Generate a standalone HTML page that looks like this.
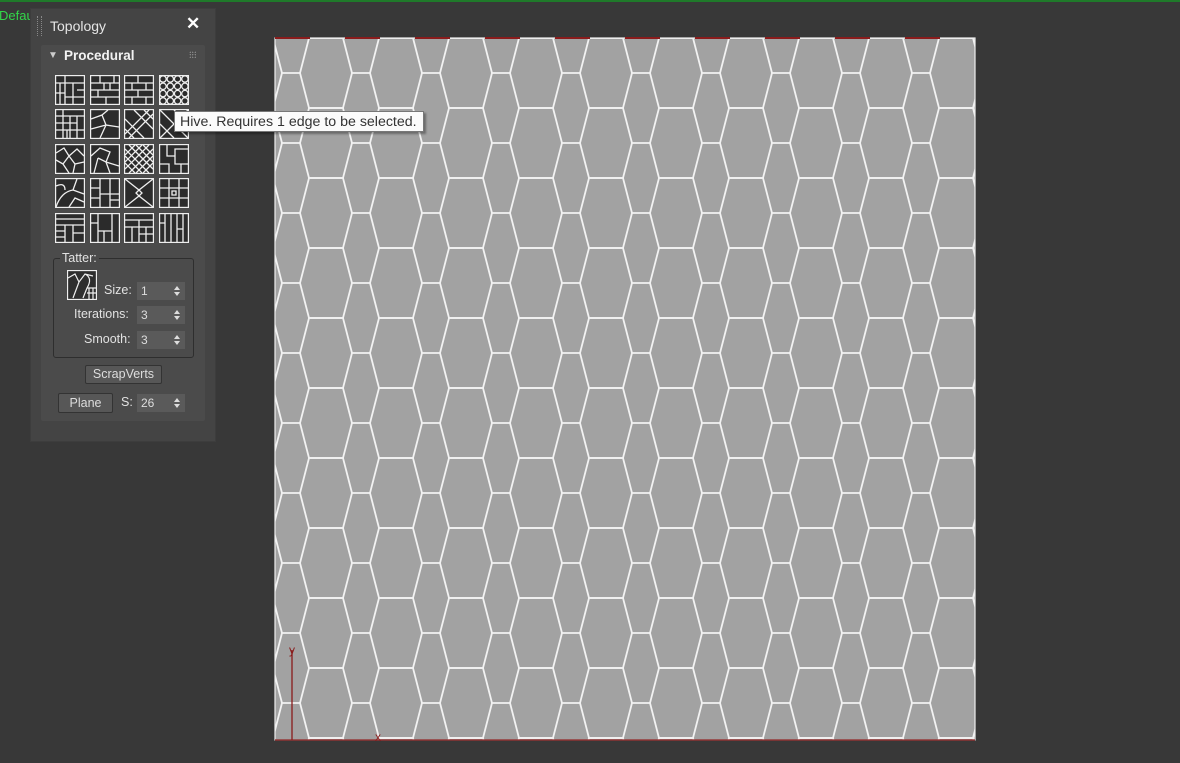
<!DOCTYPE html>
<html style="overflow:hidden"><head><meta charset="utf-8"><style>
html,body{margin:0;width:1180px;height:763px;overflow:hidden}
body{background:#383838;position:relative;font-family:"Liberation Sans",sans-serif}
.abs{position:absolute}
.ic{position:absolute;width:30px;height:30px}
.lbl{color:#e2e2e2;font-size:12.5px;position:absolute}
.spin{position:absolute;background:#5a5a5a;width:48px;height:18px;color:#ddd;font-size:12px;line-height:18px;padding-left:4px;box-sizing:border-box}
.spin:after{content:"";position:absolute;right:5px;top:4px;border:3px solid transparent;border-bottom:4px solid #ddd;border-top:0}
.spin:before{content:"";position:absolute;right:5px;top:10px;border:3px solid transparent;border-top:4px solid #ddd;border-bottom:0}
.btn{position:absolute;background:#575757;border:1px solid #333;color:#ddd;font-size:12.5px;text-align:center;border-radius:2px;box-sizing:border-box}
</style></head><body>
<div class="abs" style="left:0;top:0;width:1180px;height:2px;background:#1f7a2a"></div>
<div class="abs" style="left:-1px;top:8px;color:#33d64a;font-size:13px">Defau</div>

<svg class="abs" style="left:0;top:0;display:block" width="1180" height="763">
<defs><clipPath id="c"><rect x="275" y="38" width="700" height="702"/></clipPath></defs>
<rect x="275" y="38" width="700" height="702" fill="#a2a2a2"/>
<g clip-path="url(#c)" stroke="#f2f2f2" stroke-width="1.8" fill="none" id="hx"></g>
<rect x="275" y="38" width="700" height="702" fill="none" stroke="#eee" stroke-width="1.2"/>
<g stroke="#8a1c1c" stroke-width="2">
<line x1="275" y1="38" x2="310" y2="38"/><line x1="345" y1="38" x2="380" y2="38"/><line x1="415" y1="38" x2="450" y2="38"/><line x1="485" y1="38" x2="520" y2="38"/><line x1="555" y1="38" x2="590" y2="38"/><line x1="625" y1="38" x2="660" y2="38"/><line x1="695" y1="38" x2="730" y2="38"/><line x1="765" y1="38" x2="800" y2="38"/><line x1="835" y1="38" x2="870" y2="38"/><line x1="905" y1="38" x2="940" y2="38"/>
<line x1="275" y1="740" x2="975" y2="740" stroke-width="1.2"/>
<line x1="292" y1="650" x2="292" y2="740" stroke-width="1.3"/>
</g>
<text x="289" y="654" fill="#8a1c1c" font-size="12" font-family="Liberation Sans">y</text>
<text x="375" y="741" fill="#8a1c1c" font-size="12" font-family="Liberation Sans">x</text>
</svg>

<div class="abs" style="left:30px;top:8px;width:184px;height:432px;background:#444;border:1px solid #3d3d3d"></div>
<div class="abs" style="left:37px;top:16px;width:3px;height:20px;border-left:1px dotted #888;border-right:1px dotted #888"></div>
<div class="abs" style="left:50px;top:18px;color:#e5e5e5;font-size:14px">Topology</div>
<div class="abs" style="left:186px;top:14px;color:#fff;font-size:17px;font-weight:bold">✕</div>
<div class="abs" style="left:41px;top:45px;width:164px;height:376px;background:#4b4b4b;border-radius:2px"></div>
<div class="abs" style="left:48px;top:50px;color:#ccc;font-size:10px">▼</div>
<div class="abs" style="left:64px;top:48px;color:#f2f2f2;font-size:13.5px;font-weight:bold">Procedural</div>
<div class="abs" style="left:189px;top:51px;width:7px;height:7px;background:radial-gradient(#999 35%,transparent 40%) 0 0/2.5px 2.5px"></div>

<div id="icons"></div>

<div class="abs" style="left:53px;top:258px;width:139px;height:98px;border:1px solid #2e2e2e;border-radius:3px"></div>
<div class="abs" style="left:60px;top:251px;background:#4b4b4b;color:#e2e2e2;font-size:12.5px;padding:0 2px">Tatter:</div>
<svg class="abs" style="left:67px;top:270px" width="30" height="30"><rect x="0.5" y="0.5" width="29" height="29" fill="#2e2e2e" stroke="#eee" stroke-width="1.3"/><path d="M1 8 L8 4 L12 12 L18 4 L26 6 M12 12 L6 28 M18 4 Q26 8 20 18 L16 28 M20 18 H29 M22 18 V29 M26 18 V29 M20 23 H29" stroke="#eee" stroke-width="1.2" fill="none"/></svg>
<div class="lbl" style="left:104px;top:283px">Size:</div>
<div class="spin" style="left:137px;top:282px">1</div>
<div class="lbl" style="left:74px;top:307px">Iterations:</div>
<div class="spin" style="left:137px;top:306px">3</div>
<div class="lbl" style="left:84px;top:332px">Smooth:</div>
<div class="spin" style="left:137px;top:331px">3</div>
<div class="btn" style="left:85px;top:365px;width:77px;height:19px;line-height:17px">ScrapVerts</div>
<div class="btn" style="left:58px;top:393px;width:55px;height:20px;line-height:18px">Plane</div>
<div class="lbl" style="left:121px;top:395px">S:</div>
<div class="spin" style="left:137px;top:394px">26</div>

<div class="abs" style="left:174px;top:111px;width:250px;height:21px;background:#fbfbfb;border:1px solid #777;box-shadow:2px 2px 2px rgba(0,0,0,.35);color:#333;font-size:14.2px;line-height:21px;padding-left:5px;box-sizing:border-box;white-space:nowrap">Hive. Requires 1 edge to be selected.</div>

<script>
var g=document.getElementById('hx'),s='';
for(var cx=256;cx<=1000;cx+=70){for(var cy=3;cy<=800;cy+=70){
s+='<polygon points="'+(cx-17)+','+(cy-35)+' '+(cx+17)+','+(cy-35)+' '+(cx+26)+','+cy+' '+(cx+17)+','+(cy+35)+' '+(cx-17)+','+(cy+35)+' '+(cx-26)+','+cy+'"/>';
s+='<line x1="'+(cx+26)+'" y1="'+cy+'" x2="'+(cx+44)+'" y2="'+cy+'"/>';}}
g.innerHTML=s;
var xs=[55,90,124,159],ys=[75,109,144,178,213],pats=[
'M1 8H29M10 1V29M1 18H10M18 8V29M10 22H29M22 15H29M5 8V29',
'M1 8H29M1 15H29M1 22H29M10 1V8M20 8V15M8 15V22M16 22V29M24 1V8M14 8V15',
'M1 8H29M1 15H29M1 22H29M14 1V8M8 8V15M22 8V15M14 15V22M8 22V29M22 22V29',
'C',
'M1 7H29M1 14H22M1 21H29M8 1V29M15 7V29M22 7V29M12 21V29',
'M1 10L12 6L18 1M12 6L16 16L29 18M16 16L10 29M1 20L16 16',
'M1 10L20 29M1 20L10 29M10 1L29 20M20 1L29 10M5 29L29 5M1 25L25 1',
'M1 1L29 29M29 1L1 29M15 1L29 15M1 15L15 29',
'M1 9L9 4L14 12L22 5L29 12M14 12L8 20L1 16M8 20L14 29M14 12L20 20L29 18M20 20L18 29',
'M1 12L10 4L20 8L16 18L8 14M16 18L29 22M8 14L4 29M16 18L20 29',
'G',
'M8 1V12H16V20H22V29M16 12V5H29M1 20H10V29M22 20H29',
'M1 29Q6 14 18 12L22 1M18 12L29 16M1 8Q10 4 10 12M14 29L20 20L29 24',
'M10 1V29M1 10H10M1 20H10M10 16H29M20 1V29M20 22H29',
'M1 1L15 12L29 1M1 29L15 18L29 29M15 12L12 15L15 18L18 15Z',
'M1 10H29M1 20H29M10 1V29M20 1V29M13 13H17V17H13Z',
'M1 6H29M1 12H29M10 12V29M18 12V29M1 18H10M1 24H10M18 20H29',
'M8 1V29M1 10H8M8 18H22M22 1V29M14 18V29',
'M1 7H29M1 14H29M8 14V29M15 7V29M22 14V29M15 21H29',
'M6 1V29M12 1V29M18 1V29M24 1V29M1 10H6M18 16H24']
var h='',k=0;
for(var r=0;r<5;r++)for(var c=0;c<4;c++){var p=pats[k++],inner='';
if(p=='C'){for(var a=0;a<4;a++)for(var b=0;b<4;b++)inner+='<circle cx="'+(4+a*7.3)+'" cy="'+(4+b*7.3)+'" r="3.2"/>';}
else if(p=='G'){inner='<path d="M1 5L25 29M1 12L18 29M1 19L11 29M5 1L29 25M12 1L29 18M19 1L29 11M1 25L25 1M1 18L18 1M1 11L11 1M5 29L29 5M12 29L29 12M19 29L29 19"/>';}
else inner='<path d="'+p+'"/>';
h+='<svg class="ic" style="left:'+xs[c]+'px;top:'+ys[r]+'px" width="30" height="30"><rect x="0.5" y="0.5" width="29" height="29" fill="#2b2b2b" stroke="#eee" stroke-width="1.4"/><g stroke="#eee" stroke-width="1.3" fill="none">'+inner+'</g></svg>';}
document.getElementById('icons').innerHTML=h;
</script>
</body></html>
